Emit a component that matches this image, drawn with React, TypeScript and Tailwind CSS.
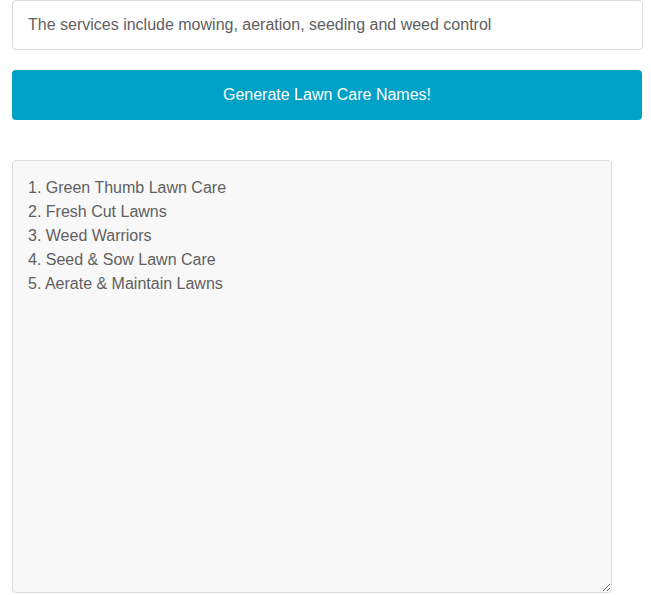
import { useState } from "react";

const names = [
  "1. Green Thumb Lawn Care",
  "2. Fresh Cut Lawns",
  "3. Weed Warriors",
  "4. Seed & Sow Lawn Care",
  "5. Aerate & Maintain Lawns",
];

export default function App() {
  const [services, setServices] = useState(
    "The services include mowing, aeration, seeding and weed control"
  );

  return (
    <div className="w-[651px] h-[595px] bg-white font-['Liberation_Sans',Arial,sans-serif] text-[16px]">
      <div className="flex flex-col pl-[12px] pr-[8px]">
        {/* Services input */}
        <input
          type="text"
          value={services}
          onChange={(e) => setServices(e.target.value)}
          className="h-[50px] w-[631px] rounded-[4px] border border-[#dcdcdc] bg-white px-[15px] text-[16px] text-[#606060] outline-none"
        />

        {/* Generate button */}
        <button className="mt-[20px] h-[50px] w-[630px] rounded-[4px] bg-[#00a1c7] text-[16px] text-white">
          Generate Lawn Care Names!
        </button>

        {/* Results */}
        <textarea
          readOnly
          value={names.join("\n")}
          className="mt-[40px] h-[433px] w-[600px] rounded-[4px] border border-[#dcdcdc] bg-[#f8f8f8] p-[15px] text-[16px] leading-[24px] text-[#606060] outline-none"
        />
      </div>
    </div>
  );
}
